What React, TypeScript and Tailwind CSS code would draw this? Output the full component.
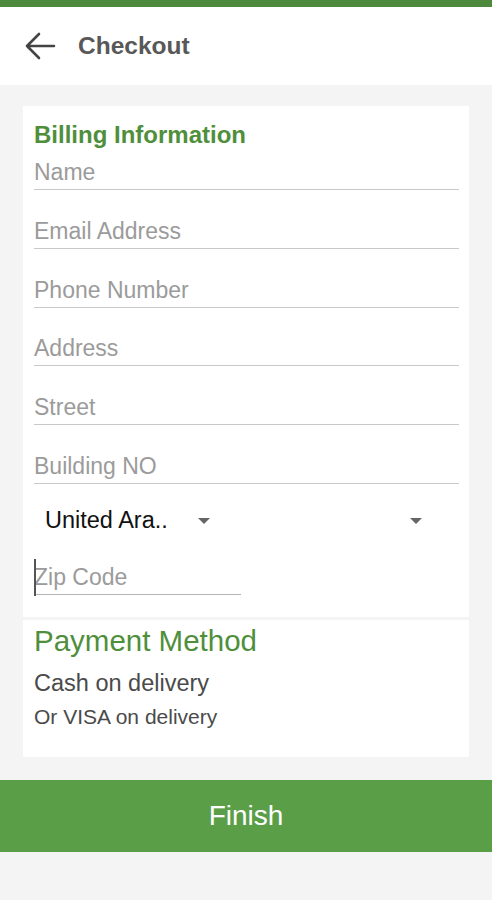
import React from "react";

const font = { fontFamily: '"Liberation Sans", Arial, sans-serif' };

function Field({ label }: { label: string }) {
  return (
    <div className="border-b border-[#c9c9c9] pb-[3px]">
      <div className="text-[23px] leading-[28px] text-[#9b9b9b]">{label}</div>
    </div>
  );
}

function Caret() {
  return (
    <svg width="14" height="8" viewBox="0 0 14 8">
      <path d="M1 1 L13 1 L7 7 Z" fill="#666" />
    </svg>
  );
}

export default function App() {
  const fields = ["Name", "Email Address", "Phone Number", "Address", "Street", "Building NO"];

  return (
    <div className="w-[492px] h-[900px] bg-[#f4f4f4] flex flex-col" style={font}>
      <div className="h-[7px] bg-[#4e8a3e]" />
      <div className="h-[78px] bg-white flex items-center">
        <svg className="ml-[24px]" width="32" height="28" viewBox="0 0 32 28">
          <path d="M30 14 H3 M15 2 L3 14 L15 26" fill="none" stroke="#444" strokeWidth="2.6" strokeLinecap="round" strokeLinejoin="round" />
        </svg>
        <span className="ml-[22px] text-[24.5px] font-bold text-[#585858]">Checkout</span>
      </div>

      <div className="mx-[23px] mt-[21px] bg-white pt-[14px] pl-[11px] pr-[10px] pb-[22px]">
        <div className="text-[24px] leading-[30px] font-bold text-[#4f8f3c]">Billing Information</div>
        <div className="mt-[8px] flex flex-col gap-[26.8px]">
          {fields.map((f) => (
            <Field key={f} label={f} />
          ))}
        </div>
        <div className="mt-[12px] h-[50px] flex items-center pl-[11px]">
          <span className="text-[23.5px] text-[#111] w-[152px]">United Ara..</span>
          <Caret />
          <div className="flex-1" />
          <span className="mr-[36px]">
            <Caret />
          </span>
        </div>
        <div className="mt-[14px] w-[207px] relative border-b border-[#b5b5b5] pt-[3px] pb-[3px]">
          <span className="absolute left-0 top-[-1px] w-[1.5px] h-[37px] bg-[#555]" />
          <div className="text-[23px] leading-[28px] text-[#9b9b9b]">Zip Code</div>
        </div>
      </div>

      <div className="mx-[23px] mt-[3px] bg-white pt-[4px] pl-[11px] pb-[27px]">
        <div className="text-[29.5px] leading-[34px] text-[#4f8f3c]">Payment Method</div>
        <div className="mt-[11px] text-[23.5px] leading-[28px] text-[#4a4a4a]">Cash on delivery</div>
        <div className="mt-[7px] text-[21px] leading-[26px] text-[#4a4a4a]">Or VISA on delivery</div>
      </div>

      <div className="mt-[23px] h-[72px] bg-[#5b9e48] flex items-center justify-center">
        <span className="text-[28px] text-white">Finish</span>
      </div>
    </div>
  );
}
